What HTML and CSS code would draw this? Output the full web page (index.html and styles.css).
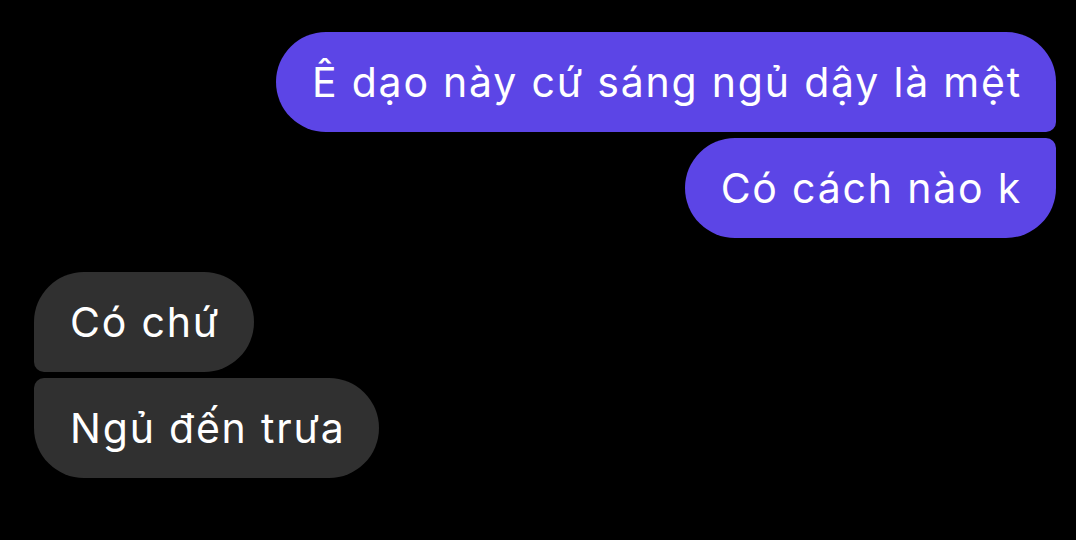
FILE: index.html
```html
<!DOCTYPE html>
<html lang="vi">
<head>
<meta charset="utf-8">
<link rel="stylesheet" href="styles.css">
</head>
<body>
<div class="chat">
  <div class="group sent">
    <div class="bubble first">Ê dạo này cứ sáng ngủ dậy là mệt</div>
    <div class="bubble last">Có cách nào k</div>
  </div>
  <div class="group recv">
    <div class="bubble first">Có chứ</div>
    <div class="bubble last">Ngủ đến trưa</div>
  </div>
</div>
</body>
</html>
```
FILE: styles.css
```css
html, body {
  margin: 0;
  padding: 0;
  background: #000;
  width: 1076px;
  height: 540px;
  overflow: hidden;
}
.chat {
  display: flex;
  flex-direction: column;
  gap: 34px;
  padding: 32px 20px 0 34px;
  font-family: Inter, "Noto Sans", sans-serif;
}
.group {
  display: flex;
  flex-direction: column;
  gap: 6px;
}
.sent { align-items: flex-end; }
.recv { align-items: flex-start; }
.bubble {
  height: 100px;
  box-sizing: border-box;
  display: flex;
  align-items: center;
  padding: 0 34px 0 36px;
  font-size: 41px;
  letter-spacing: 1.8px;
  color: #fff;
  border-radius: 50px;
  white-space: nowrap;
}
.sent .bubble { background: #5c45e6; }
.recv .bubble { background: #303030; }
.sent .first { border-bottom-right-radius: 10px; }
.sent .last { border-top-right-radius: 10px; }
.recv .first { border-bottom-left-radius: 10px; }
.recv .last { border-top-left-radius: 10px; }
```
